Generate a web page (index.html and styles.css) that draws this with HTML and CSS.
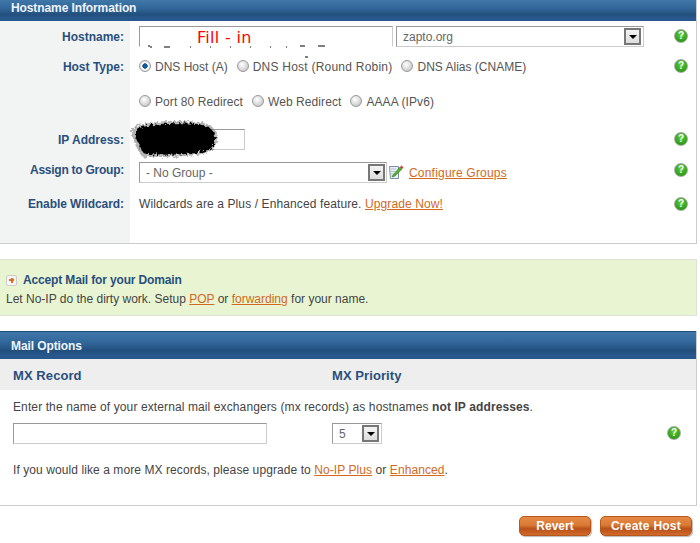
FILE: index.html
```html
<!DOCTYPE html>
<html lang="en">
<head>
<meta charset="utf-8">
<title>Hostname Information</title>
<link rel="stylesheet" href="styles.css">
</head>
<body>
<section class="panel panel-host">
  <h2 class="bar">Hostname Information</h2>
  <div class="row row-name">
    <div class="lab">Hostname:</div>
    <div class="val">
      <div class="field field-host">Fill - in
        <svg class="specks" width="190" height="16" viewBox="0 0 190 16"><path d="M8 3h2M10 4h2M24 4h6M50 4h1M70 4h1M90 4h1M110 4h1M130 4h1M146 4h1M160 3h5M178 3h7M165 14h3" stroke="#000" stroke-width="1" fill="none"/></svg>
      </div>
      <div class="select select-domain"><span class="select-text">zapto.org</span><span class="arrow"></span></div>
      <span class="help">?</span>
    </div>
  </div>
  <div class="row row-type">
    <div class="lab">Host Type:</div>
    <div class="val">
      <div class="radios">
        <div class="radio-line">
          <label class="radio"><input type="radio" name="t" checked>DNS Host (A)</label>
          <label class="radio radio-wide"><input type="radio" name="t">DNS Host (Round Robin)</label>
          <label class="radio"><input type="radio" name="t">DNS Alias (CNAME)</label>
        </div>
        <div class="radio-line radio-line-second">
          <label class="radio"><input type="radio" name="t">Port 80 Redirect</label>
          <label class="radio"><input type="radio" name="t">Web Redirect</label>
          <label class="radio"><input type="radio" name="t">AAAA (IPv6)</label>
        </div>
      </div>
      <span class="help">?</span>
    </div>
  </div>
  <div class="row row-ip">
    <div class="lab">IP Address:</div>
    <div class="val">
      <div class="field field-ip"></div>
      <svg class="blot" width="90" height="42" viewBox="0 0 90 42">
        <defs><filter id="rough" x="-10%" y="-10%" width="120%" height="120%"><feTurbulence type="fractalNoise" baseFrequency="0.35" numOctaves="2" seed="4"/><feDisplacementMap in="SourceGraphic" scale="7"/></filter></defs>
        <path filter="url(#rough)" d="M2 7C20 1 48 0 68 2C80 3 87 8 87 18C87 29 80 33 66 35C50 37 30 37 16 37C12 41 7 28 2 17Z" fill="#777" opacity=".55"/>
        <path filter="url(#rough)" d="M6 9C20 4 45 2 66 4C78 5 85 9 85 18C85 27 80 31 66 33C50 35 30 35 18 34C14 38 10 26 6 17Z" fill="#000"/>
      </svg>
      <span class="help">?</span>
    </div>
  </div>
  <div class="row row-group">
    <div class="lab lab-tight">Assign to Group:</div>
    <div class="val">
      <div class="select select-group"><span class="select-text">- No Group -</span><span class="arrow"></span></div>
      <svg class="edit" width="16" height="16" viewBox="0 0 16 16"><path d="M1.5 2.5h9v12h-8z" fill="#e8eef6" stroke="#7d8fa8"/><path d="M3 5h5M3 7.500h4M3 10h3" stroke="#b3c0d2"/><path d="M5 11L12 3l2 2-7 7-3 1z" fill="#55b030" stroke="#2f7d1a" stroke-width=".6"/><path d="M12 3l1.500-1.500 2 2L14 5z" fill="#e23b3b"/></svg>
      <a class="link link-config" href="#">Configure Groups</a>
      <span class="help">?</span>
    </div>
  </div>
  <div class="row row-wild">
    <div class="lab">Enable Wildcard:</div>
    <div class="val">
      <span class="text text-wide">Wildcards are a Plus / Enhanced feature. <a class="link" href="#">Upgrade Now!</a></span>
      <span class="help">?</span>
    </div>
  </div>
</section>

<section class="promo">
  <div class="promo-title"><span class="plus"></span>Accept Mail for your Domain</div>
  <div class="text">Let No-IP do the dirty work. Setup <a class="link" href="#">POP</a> or <a class="link" href="#">forwarding</a> for your name.</div>
</section>

<section class="panel panel-mail">
  <h2 class="bar bar-mail">Mail Options</h2>
  <div class="mx-head"><div class="mx-col">MX Record</div><div>MX Priority</div></div>
  <div class="mx-body">
    <p class="text text-wide mx-note">Enter the name of your external mail exchangers (mx records) as hostnames <b>not IP addresses</b>.</p>
    <div class="mx-row">
      <div class="mx-col"><div class="field field-mx"></div></div>
      <div class="select select-pri"><span class="select-text">5</span><span class="arrow"></span></div>
      <span class="help help-mx">?</span>
    </div>
    <p class="text mx-up">If you would like a more MX records, please upgrade to <a class="link" href="#">No-IP Plus</a> or <a class="link" href="#">Enhanced</a>.</p>
  </div>
</section>

<div class="actions">
  <button class="btn btn-revert" type="button">Revert</button>
  <button class="btn btn-create" type="button">Create Host</button>
</div>
</body>
</html>
```
FILE: styles.css
```css
* { box-sizing: border-box; }
html, body { margin: 0; padding: 0; background: #fff; }
body { width: 700px; height: 543px; overflow: hidden; font: 12px/14px "Liberation Sans", Arial, sans-serif; color: #444; }
.panel { width: 697px; border-right: 1px solid #ccc; border-bottom: 1px solid #ccc; }
.panel-host { height: 244px; background: linear-gradient(90deg, #f2f4f4 130px, #fff 130px); }
.bar { margin: 0; height: 21px; padding: 1px 0 0 11px; font-size: 12px; line-height: 14px; font-weight: bold; letter-spacing: -.1px; color: #eef4fa; background: linear-gradient(#3f77a8 0, #31669a 40%, #224f7c 70%, #27578c 85%, #27578c 100%); }
.row { display: flex; }
.lab { width: 130px; flex: none; padding-right: 6px; text-align: right; font-weight: bold; color: #2a4f7c; }
.lab-tight { letter-spacing: -.25px; }
.val { flex: 1; display: flex; align-items: flex-start; position: relative; padding-left: 9px; }
.help { position: absolute; right: 8px; width: 14px; height: 14px; border-radius: 50%; border: 1px solid #a8a8a8; background: radial-gradient(circle at 50% 35%, #5fd03a, #2b9a16 75%); color: #fff; font-size: 10px; line-height: 12px; font-weight: bold; text-align: center; }
.field { border: 1px solid; border-color: #999 #ccc #ccc #999; background: #fff; height: 21px; }
.select { display: flex; align-items: center; justify-content: space-between; border: 1px solid; border-color: #999 #ccc #ccc #999; height: 21px; background: #fff; padding: 0 1px 0 6px; }
.select-text { color: #666; }
.arrow { width: 17px; height: 17px; border: 2px solid #777; background: linear-gradient(#f4f4f4, #ddd); position: relative; }
.arrow::after { content: ""; position: absolute; left: 3px; top: 5px; border: 4px solid transparent; border-top: 4px solid #000; border-bottom: 0; }
.row-name { height: 35px; }
.row-name .lab { padding-top: 9px; }
.row-name .val { padding-top: 5px; }
.row-name .help { top: 8px; }
.field-host { position: relative; width: 254px; border-bottom-color: transparent; padding-left: 57px; color: #f00; font: 16px/21px "DejaVu Sans", sans-serif; letter-spacing: .3px; }
.specks { position: absolute; left: 0; bottom: -13px; }
.select-domain { width: 248px; margin-left: 3px; padding-right: 2px; }
.row-type { height: 64px; }
.row-type .lab { padding-top: 4px; }
.row-type .help { top: 3px; }
.radios { display: flex; flex-direction: column; gap: 15px; padding-top: 1px; }
.radio-line { display: flex; height: 20px; align-items: center; gap: 9px; }
.radio-line-second { letter-spacing: .08px; }
.radio { display: flex; align-items: center; color: #555; }
.radio-wide { letter-spacing: .23px; }
.radio input { appearance: none; width: 12px; height: 12px; margin: 0 4px 3px 0; border-radius: 50%; border: 1px solid #999; background: radial-gradient(circle at 40% 35%, #fff, #c4c4c4 85%); }
.radio input:checked { background: radial-gradient(circle, #0c6cb0 0, #0c4f8c 34%, #fff 42%, #d0d0d0 90%); }
.row-ip { height: 38px; }
.row-ip .lab { padding-top: 13px; }
.row-ip .val { padding-top: 9px; }
.row-ip .help { top: 12px; }
.field-ip { width: 106px; }
.blot { position: absolute; left: 0; top: 0; }
.row-group { height: 34px; }
.row-group .lab { padding-top: 5px; }
.row-group .val { padding-top: 4px; align-items: flex-start; }
.row-group .help { top: 5px; }
.select-group { width: 248px; }
.edit { margin: 2px 0 0 1px; }
.link { color: #d2691e; text-decoration: underline; }
.link-config { margin: 4px 0 0 5px; letter-spacing: .2px; }
.row-wild .lab { padding-top: 5px; letter-spacing: -.07px; }
.row-wild .val { padding-top: 5px; }
.row-wild .help { top: 5px; }
.text { color: #444; }
.text-wide { letter-spacing: .11px; }
.promo { width: 697px; height: 57px; margin-top: 15px; padding: 13px 6px 0; background: #e9f5d2; border: 1px solid #dfe3d3; border-left: 0; }
.promo-title { display: flex; align-items: center; height: 14px; font-weight: bold; letter-spacing: -.15px; color: #2a4f7c; margin-bottom: 5px; }
.plus { width: 11px; height: 11px; margin-right: 6px; border: 1px solid #ccc; border-radius: 2px; background: linear-gradient(#e76b1f, #e76b1f) center/5px 2px no-repeat, linear-gradient(#e76b1f, #e76b1f) center/2px 5px no-repeat, #f7f7f2; }
.panel-mail { margin-top: 15px; height: 175px; }
.bar-mail { height: 28px; padding-top: 7px; border-top: 1px solid #1d4a78; }
.mx-head { display: flex; height: 31px; padding: 10px 0 0 13px; background: #eee; font-size: 13px; font-weight: bold; letter-spacing: .08px; color: #2a4f7c; }
.mx-col { width: 319px; flex: none; }
.mx-body { padding: 10px 0 0 13px; position: relative; }
.mx-note { margin: 0; }
.mx-row { display: flex; margin-top: 9px; }
.field-mx { width: 254px; }
.select-pri { width: 50px; padding-right: 2px; }
.help-mx { right: 15px; top: 36px; }
.mx-up { margin: 19px 0 0; letter-spacing: .08px; }
.actions { display: flex; justify-content: flex-end; gap: 9px; width: 692px; margin-top: 10px; }
.btn { height: 20px; padding: 0; border: 1px solid #b8571c; border-radius: 5px; color: #fff; font: bold 12px/16px "Liberation Sans", Arial, sans-serif; background: linear-gradient(#e58a45 0, #d97a35 45%, #b9501a 65%, #d06a2a 100%); box-shadow: 1px 1px 1px #bbb; }
.btn-revert { width: 72px; }
.btn-create { width: 92px; letter-spacing: .25px; }
```
